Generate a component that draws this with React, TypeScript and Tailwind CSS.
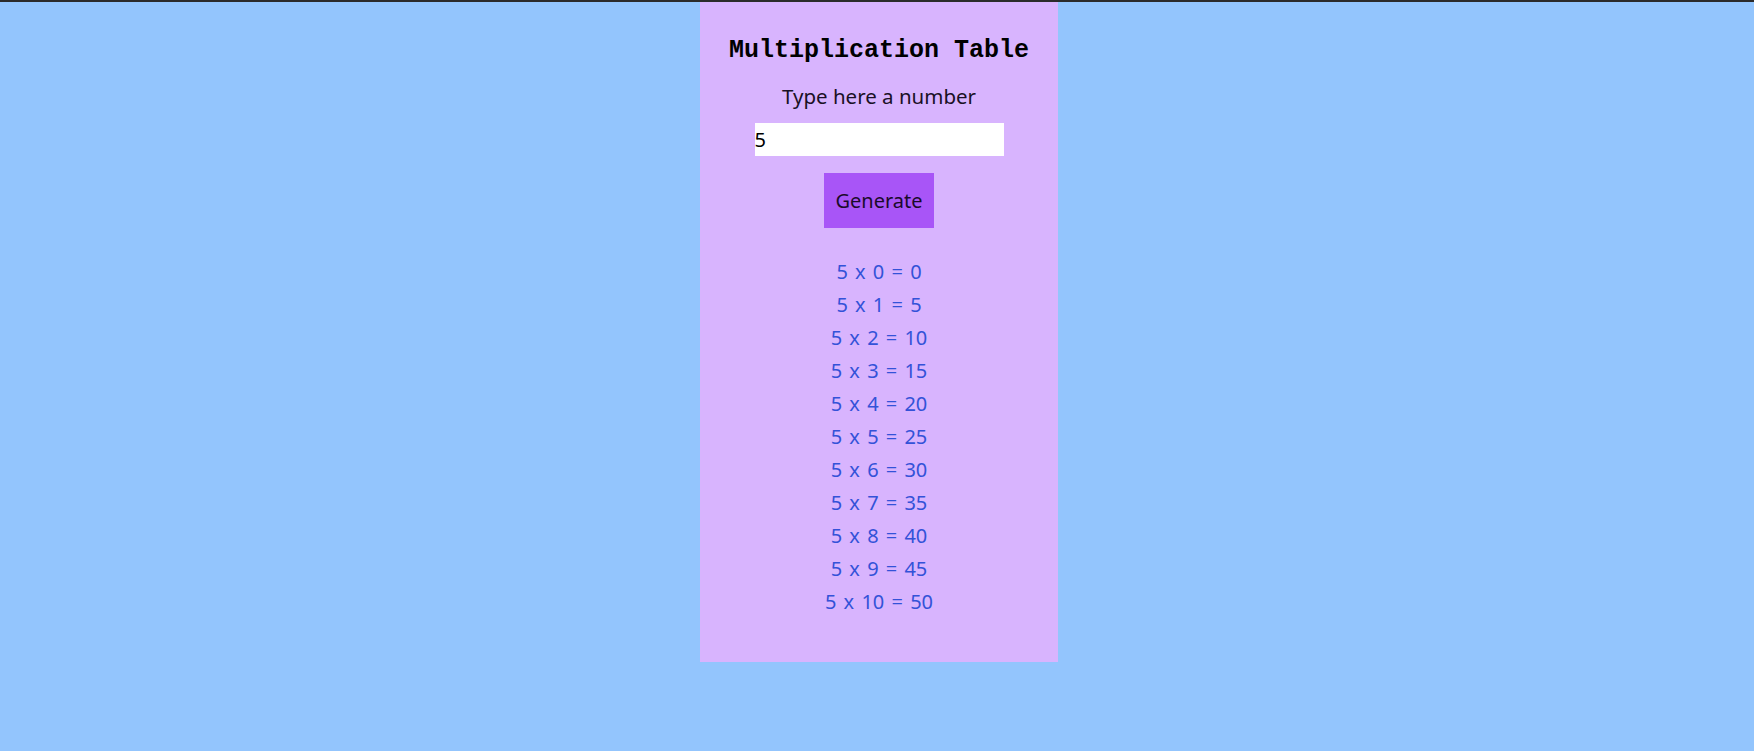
import React from "react";

export default function App() {
  const n = 5;
  const rows = Array.from({ length: 11 }, (_, i) => i);
  return (
    <div className="min-h-[751px] w-full bg-[#93c5fd] flex flex-col">
      <div className="h-[2px] w-full bg-[#2b2b2b]" />
      <div className="w-full pl-[4px] flex">
        <div
          className="mx-auto w-[358px] bg-[#d8b4fe] flex flex-col items-center pt-[33px] pb-[44px]"
          style={{ fontFamily: '"Noto Sans", "Open Sans", sans-serif' }}
        >
          <h1
            className="text-[25px] leading-[32px] font-bold text-black"
            style={{ fontFamily: '"Liberation Mono", "DejaVu Sans Mono", monospace' }}
          >
            Multiplication Table
          </h1>
          <label className="mt-[15px] text-[20.5px] leading-[28px] text-[#1a1025]">Type here a number</label>
          <input
            type="number"
            defaultValue={5}
            className="mt-[13px] w-[249px] h-[33px] bg-white text-[20px] text-black outline-none p-0 border-0"
          />
          <button className="mt-[17px] w-[110px] h-[55px] bg-[#a855f7] text-[20px] text-[#1a0a2a]">
            Generate
          </button>
          <div className="mt-[27px] flex flex-col items-center text-[20px] leading-[33px] text-[#3352d8] [word-spacing:2px]">
            {rows.map((i) => (
              <p key={i}>
                {n} x {i} = {n * i}
              </p>
            ))}
          </div>
        </div>
      </div>
    </div>
  );
}
